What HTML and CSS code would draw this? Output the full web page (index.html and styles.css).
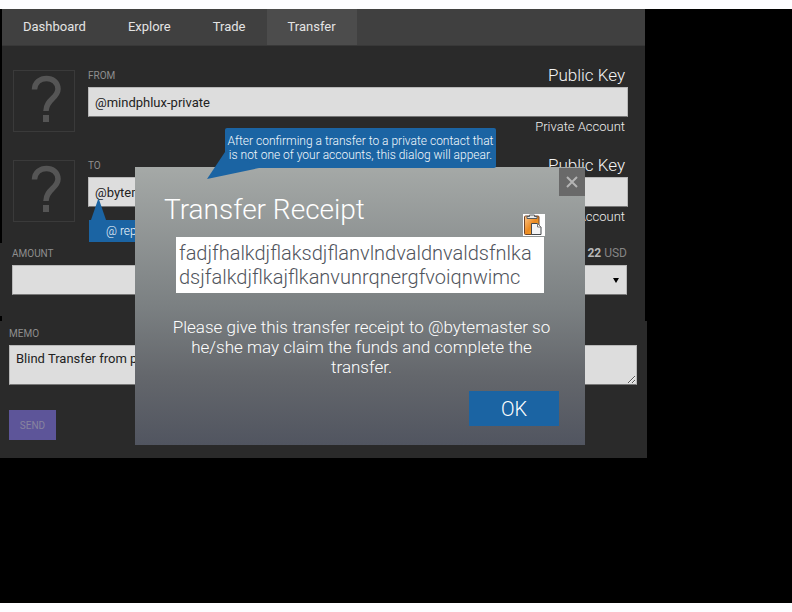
FILE: index.html
```html
<!DOCTYPE html>
<html lang="en">
<head>
<meta charset="utf-8">
<title>Transfer</title>
<link rel="stylesheet" href="styles.css">
</head>
<body>
<div class="stage">
  <main class="app">
    <section class="accounts">
      <nav class="tabs">
        <a class="tab" href="#">Dashboard</a>
        <a class="tab" href="#">Explore</a>
        <a class="tab" href="#">Trade</a>
        <a class="tab active" href="#">Transfer</a>
      </nav>
      <div class="rows">
        <div class="row">
          <svg class="avatar" viewBox="0 0 62 62" aria-hidden="true">
            <rect x="0.5" y="0.5" width="61" height="61"/>
            <path d="M21.500 19.500C22 4.500 45 5 45 19C45 28 33 29.500 33 41"/>
            <path class="dot" d="M30 45h6v7h-6z"/>
          </svg>
          <div class="field">
            <div class="head"><label for="from">FROM</label><span class="key">Public Key</span></div>
            <input id="from" type="text" value="@mindphlux-private">
            <div class="hint">Private Account</div>
          </div>
        </div>
        <div class="row">
          <svg class="avatar" viewBox="0 0 62 62" aria-hidden="true">
            <rect x="0.5" y="0.5" width="61" height="61"/>
            <path d="M21.500 19.500C22 4.500 45 5 45 19C45 28 33 29.500 33 41"/>
            <path class="dot" d="M30 45h6v7h-6z"/>
          </svg>
          <div class="field">
            <div class="head"><label for="to">TO</label><span class="key">Public Key</span></div>
            <input id="to" type="text" value="@bytemaster">
            <div class="hint">Private Account</div>
          </div>
        </div>
      </div>
    </section>
    <section class="amount">
      <div class="head"><label for="amount">AMOUNT</label><span class="balance"><b>22</b> USD</span></div>
      <div class="amount-line">
        <input id="amount" type="text">
        <div class="unit">
          <select aria-label="Currency"><option></option></select>
          <svg class="arrow" viewBox="0 0 6 5" aria-hidden="true"><path d="M0 0h6L3 5z"/></svg>
        </div>
      </div>
    </section>
    <section class="memo">
      <div class="head"><label for="memo">MEMO</label></div>
      <textarea id="memo">Blind Transfer from private</textarea>
      <button class="send" type="button">SEND</button>
    </section>

    <div class="note note-at">@ rep</div>

    <div class="dialog" role="dialog" aria-labelledby="title">
      <button class="close" type="button" aria-label="Close">
        <svg viewBox="0 0 12 12"><path d="M1 1l10 10M11 1L1 11"/></svg>
      </button>
      <h1 id="title">Transfer Receipt</h1>
      <button class="copy" type="button" aria-label="Copy receipt">
        <svg viewBox="0 0 22 22">
          <defs><linearGradient id="board" x1="0" y1="0" x2="1" y2="1"><stop offset="0" stop-color="#ffc98c"/><stop offset="0.500" stop-color="#ec8a22"/><stop offset="1" stop-color="#f5b427"/></linearGradient></defs>
          <rect x="1.500" y="2" width="14.500" height="18.500" rx="1" fill="url(#board)" stroke="#70452a"/>
          <path d="M4 2.500h2.500V1h5v1.500H14v2H4z" fill="#e8eaeb" stroke="#555b60"/>
          <path d="M8.500 9.500h6l3.500 3.500v7.500H8.500z" fill="#f3f3f4" stroke="#44484c"/>
          <path d="M14.500 9.500V13H18z" fill="#fff" stroke="#777"/>
        </svg>
      </button>
      <p class="receipt">fadjfhalkdjflaksdjflanvlndvaldnvaldsfnlka<br>dsjfalkdjflkajflkanvunrqnergfvoiqnwimc</p>
      <p class="message">Please give this transfer receipt to @bytemaster so<br>he/she may claim the funds and complete the<br>transfer.</p>
      <button class="ok" type="button">OK</button>
    </div>

    <div class="note note-dialog">After confirming a transfer to a private contact that<br>is not one of your accounts, this dialog will appear.</div>
  </main>
</div>
</body>
</html>
```
FILE: styles.css
```css
* { box-sizing: border-box; }

body {
  margin: 0;
  background: #fdfdff;
  font-family: Roboto, "Liberation Sans", sans-serif;
}

button, input, select, textarea { font-family: inherit; margin: 0; border-radius: 0; }

.stage {
  margin: 9px 0;
  min-height: calc(100vh - 18px);
  background: #000;
  padding-right: 145px;
}

.app { position: relative; }

.accounts { margin: 0 2px; background: #2a2a2a; }

.tabs {
  display: flex;
  height: 37px;
  background: #404040;
  border-bottom: 1px solid #383838;
}

.tab {
  display: flex;
  align-items: center;
  padding: 0 21px 2px;
  color: #e4e4e4;
  font-size: 13px;
  text-decoration: none;
}

.tab.active { background: #4c4c4c; }

.rows {
  display: flex;
  flex-direction: column;
  gap: 18px;
  padding: 19px 17px 16px 11px;
}

.row { display: flex; gap: 13px; }

.avatar { flex: none; width: 62px; height: 62px; margin-top: 5px; }
.avatar rect { fill: none; stroke: #3a3a3a; }
.avatar path { fill: none; stroke: #555; stroke-width: 5.5; }
.avatar .dot { fill: #555; stroke: none; }

.field { flex: 1; min-width: 0; }

.head {
  display: flex;
  justify-content: space-between;
  align-items: center;
  height: 22px;
  padding-bottom: 2px;
  color: #8e8e8e;
  font-size: 10px;
}

.key { padding-right: 3px; color: #f4f4f4; font-size: 17px; font-weight: 300; }

.field input, .amount input, .amount select, .memo textarea {
  display: block;
  width: 100%;
  height: 30px;
  padding: 0 6px;
  background: #ddd;
  border: 1px solid #b8b8b8;
  border-bottom-color: #777;
  color: #222;
  font-size: 13px;
}

.hint {
  height: 20px;
  padding-right: 3px;
  color: #f0f0f0;
  font-size: 13px;
  font-weight: 300;
  line-height: 20px;
  text-align: right;
}

.amount { position: relative; padding: 0 18px 26px 12px; margin-right: 2px; background: #2a2a2a; }
.amount::after { content: ""; position: absolute; left: 0; bottom: 0; width: 2px; height: 5px; background: #000; }
.amount-line { display: flex; gap: 12px; }
.amount-line input { flex: 3; width: auto; min-width: 0; }
.balance { font-size: 12px; color: #858585; }
.balance b { color: #b8b8b8; }
.unit { position: relative; flex: 1; }
.amount select { appearance: none; }
.arrow { position: absolute; right: 8px; top: 13px; width: 6px; height: 5px; }

.memo { padding: 2px 10px 18px 9px; background: #2a2a2a; }
.memo textarea { height: 40px; padding: 5px 6px; resize: vertical; }

.send {
  display: block;
  width: 47px;
  height: 30px;
  margin-top: 25px;
  padding: 0;
  background: #5d5599;
  border: 0;
  color: #88849f;
  font-size: 10px;
}

.dialog {
  position: absolute;
  top: 158px;
  left: 135px;
  right: 62px;
  display: flex;
  flex-direction: column;
  padding: 25px 26px 19px 29px;
  background: linear-gradient(#a5a9a7, #7b8082 50%, #64676c 75%, #515560);
  color: #fff;
  font-weight: 300;
}

.dialog h1 { margin: 0; font-size: 28px; font-weight: 300; line-height: 36px; }

.close {
  position: absolute;
  top: 1px;
  right: 0;
  width: 26px;
  height: 28px;
  padding: 7px;
  background: #696969;
  border: 0;
}
.close svg { display: block; width: 12px; height: 12px; fill: none; stroke: #b4b4b4; stroke-width: 2; }

.copy {
  position: absolute;
  top: 47px;
  right: 40px;
  width: 22px;
  height: 22px;
  padding: 0;
  background: #fff;
  border: 0;
}
.copy svg { display: block; width: 22px; height: 22px; }

.receipt {
  margin: 9px 15px 0 12px;
  padding: 4px 3px;
  background: #fff;
  color: #50545c;
  font-size: 20px;
  line-height: 24px;
  white-space: nowrap;
}

.message {
  margin: 24px 0 14px;
  font-size: 17px;
  line-height: 20px;
  text-align: center;
  white-space: nowrap;
}

.ok {
  align-self: flex-end;
  width: 90px;
  height: 35px;
  background: #1b64a3;
  border: 0;
  color: #fff;
  font-size: 20px;
  font-weight: 300;
}

.note {
  position: absolute;
  background: #1b64a3;
  color: #f4f9fd;
  font-size: 12px;
  font-weight: 300;
  line-height: 14px;
  white-space: nowrap;
}

.note::before { content: ""; position: absolute; z-index: -1; background: #1b64a3; }

.note-dialog {
  z-index: 1;
  top: 119px;
  left: 225px;
  width: 271px;
  padding: 6px 0;
  border-radius: 2px;
  text-align: center;
}
.note-dialog::before {
  top: 24px;
  left: -18px;
  width: 52px;
  height: 27px;
  clip-path: polygon(18px 0, 52px 14px, 52px 16px, 0 100%);
}

.note-at { z-index: 0; top: 211px; left: 89px; width: 60px; padding: 4px 0 4px 17px; }
.note-at::before {
  top: -22px;
  left: 2px;
  width: 15px;
  height: 22px;
  clip-path: polygon(50% 0, 100% 100%, 0 100%);
}
```
